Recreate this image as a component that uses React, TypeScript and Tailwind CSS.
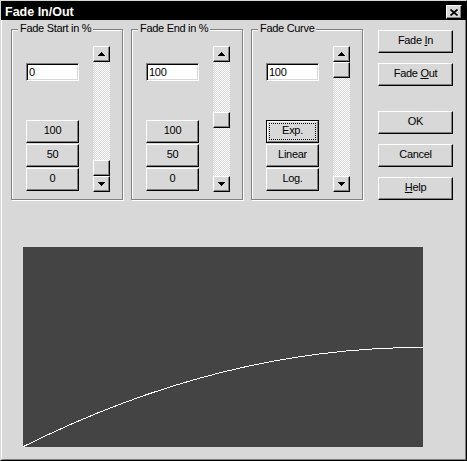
import React from "react";

const bevel =
  "border border-white border-r-black border-b-black shadow-[inset_-1px_-1px_0_#808080] bg-[#d8d8d8]";

function Btn({
  children,
  className = "",
  isDefault = false,
}: {
  children?: React.ReactNode;
  className?: string;
  isDefault?: boolean;
}) {
  if (isDefault) {
    return (
      <div className={"border border-black bg-[#d8d8d8] " + className}>
        <div className="relative h-full w-full border border-white border-r-[#808080] border-b-[#808080] flex items-center justify-center pb-[2px]">
          <div className="absolute inset-[1px] border border-dotted border-black" />
          <span>{children}</span>
        </div>
      </div>
    );
  }
  return (
    <div className={"flex items-center justify-center pb-[2px] " + bevel + " " + className}>
      {children}
    </div>
  );
}

function ArrowBtn({ up = false }: { up?: boolean }) {
  return (
    <div className={"w-[17px] h-[16px] shrink-0 flex items-center justify-center pb-[1px] " + bevel}>
      <svg width="7" height="4" viewBox="0 0 7 4" shapeRendering="crispEdges">
        {up ? (
          <path d="M3 0h1v1h1v1h1v1h1v1H0V3h1V2h1V1h1z" fill="#000" />
        ) : (
          <path d="M0 0h7v1h-1v1h-1v1h-1v1h-1V3H2V2H1V1H0z" fill="#000" />
        )}
      </svg>
    </div>
  );
}

function Scroll({ thumbClass }: { thumbClass: string }) {
  return (
    <div className="flex flex-col w-[17px] h-[146px]">
      <ArrowBtn up />
      <div className="flex-1 flex flex-col bg-[image:repeating-conic-gradient(#ffffff_0_25%,#d8d8d8_0_50%)] bg-[length:2px_2px]">
        <div className={"w-[17px] h-[16px] " + bevel + " " + thumbClass} />
      </div>
      <ArrowBtn />
    </div>
  );
}

function Group({
  title,
  value,
  labels,
  thumbClass,
  defaultIdx = -1,
}: {
  title: string;
  value: string;
  labels: string[];
  thumbClass: string;
  defaultIdx?: number;
}) {
  return (
    <div className="relative w-[112px] h-[171px] border border-[#808080] shadow-[inset_1px_1px_0_#ffffff,1px_1px_0_#ffffff] pl-[14px] pt-[16px] flex">
      <span className="absolute left-[6px] top-[-8px] px-[2px] bg-[#d8d8d8] leading-[13px] whitespace-nowrap">
        {title}
      </span>
      <div className="flex flex-col w-[53px]">
        <div className="mt-[17px] h-[18px] bg-white border border-[#808080] border-r-white border-b-white shadow-[inset_1px_1px_0_#000000,inset_-1px_-1px_0_#d8d8d8] pl-[2px] leading-[16px]">
          {value}
        </div>
        <div className="mt-[39px] flex flex-col gap-[1px]">
          {labels.map((l, i) => (
            <Btn key={l} className="w-[53px] h-[23px]" isDefault={i === defaultIdx}>
              {l}
            </Btn>
          ))}
        </div>
      </div>
      <div className="ml-[14px]">
        <Scroll thumbClass={thumbClass} />
      </div>
    </div>
  );
}

export default function App() {
  return (
    <div className="w-[467px] h-[461px] flex flex-col border border-[#d8d8d8] border-r-black border-b-black bg-[#d8d8d8] font-['Liberation_Sans',Arial,sans-serif] text-[11px] tracking-[-0.3px] text-black">
      <div className="h-[19px] shrink-0 bg-black flex items-start justify-between">
        <span className="pl-[4px] pt-[3px] leading-[16px] text-white font-bold text-[12.5px] tracking-normal">
          Fade In/Out
        </span>
        <div className={"mt-[4px] mr-[4px] w-[16px] h-[14px] flex items-center justify-center " + bevel}>
          <svg width="8" height="7" viewBox="0 0 8 7">
            <path d="M0.5 0.5L7.5 6.5M7.5 0.5L0.5 6.5" stroke="#000" strokeWidth="1.7" fill="none" />
          </svg>
        </div>
      </div>
      <div className="flex-1 flex flex-col border-l border-l-white border-r border-r-[#808080] border-b border-b-[#808080] pl-[9px]">
        <div className="flex">
          <div className="flex gap-[8px] mt-[9px]">
            <Group
              title="Fade Start in %"
              value="0"
              labels={["100", "50", "0"]}
              thumbClass="mt-[98px]"
            />
            <Group
              title="Fade End in %"
              value="100"
              labels={["100", "50", "0"]}
              thumbClass="mt-[50px]"
            />
            <Group
              title="Fade Curve"
              value="100"
              labels={["Exp.", "Linear", "Log."]}
              thumbClass="mt-0"
              defaultIdx={0}
            />
          </div>
          <div className="ml-[15px] mt-[10px] flex flex-col w-[75px]">
            <Btn className="h-[23px]">
              <span>
                Fade <span className="underline underline-offset-[1px]">I</span>n
              </span>
            </Btn>
            <Btn className="h-[23px] mt-[10px]">
              <span>
                Fade <span className="underline underline-offset-[1px]">O</span>ut
              </span>
            </Btn>
            <Btn className="h-[23px] mt-[25px]">OK</Btn>
            <Btn className="h-[23px] mt-[10px]">Cancel</Btn>
            <Btn className="h-[23px] mt-[10px]">
              <span>
                <span className="underline underline-offset-[1px]">H</span>elp
              </span>
            </Btn>
          </div>
        </div>
        <div className="ml-[12px] mt-[47px] w-[400px] h-[200px] bg-[#444444]">
          <svg width="400" height="200" viewBox="0 0 400 200">
            <path
              d="M0.5 199.5 Q200 100 400 100.5"
              fill="none"
              stroke="#ffffff"
              strokeWidth="1"
              shapeRendering="crispEdges"
            />
          </svg>
        </div>
      </div>
    </div>
  );
}
